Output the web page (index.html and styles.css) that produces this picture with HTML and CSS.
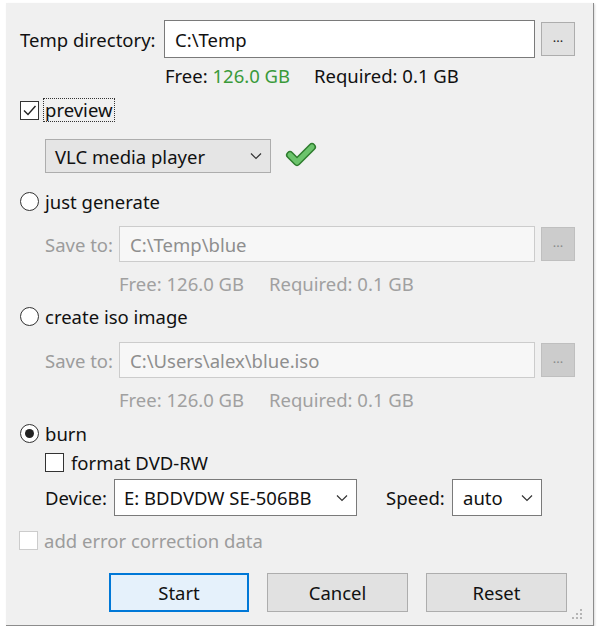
FILE: index.html
```html
<!DOCTYPE html>
<html>
<head>
<meta charset="utf-8">
<link rel="stylesheet" href="styles.css">
</head>
<body>
<div class="window">
  <div class="row row-temp">
    <span class="lbl lbl-temp">Temp directory:</span>
    <div class="input input-temp">C:\Temp</div>
    <div class="dots-btn">...</div>
  </div>
  <div class="row info info-1">
    <span class="free">Free: <span class="green">126.0 GB</span></span>
    <span>Required: 0.1 GB</span>
  </div>
  <div class="row row-preview">
    <span class="box checked"><svg width="17" height="17" viewBox="0 0 17 17"><path d="M3 8.5 L7 12.5 L14.5 4" fill="none" stroke="#222" stroke-width="1.4"/></svg></span>
    <span class="focus">preview</span>
  </div>
  <div class="row row-combo">
    <div class="combo combo-vlc"><span>VLC media player</span><svg class="chev" width="12" height="8" viewBox="0 0 12 8"><path d="M1 1.5 L6 6.5 L11 1.5" fill="none" stroke="#333" stroke-width="1.2"/></svg></div>
    <svg class="okicon" width="32" height="26" viewBox="0 0 32 26"><path d="M5 13 L12 20 L27 5" fill="none" stroke="#2f7d2f" stroke-width="8" stroke-linecap="round" stroke-linejoin="round"/><path d="M5 13 L12 20 L27 5" fill="none" stroke="#6cc46c" stroke-width="5" stroke-linecap="round" stroke-linejoin="round"/></svg>
  </div>
  <div class="row row-radio r1">
    <span class="radio"></span><span class="rlabel">just generate</span>
  </div>
  <div class="row row-save s1">
    <span class="lbl dis lbl-save">Save to:</span>
    <div class="input input-dis">C:\Temp\blue</div>
    <div class="dots-btn dots-dis">...</div>
  </div>
  <div class="row info info-dis">
    <span class="free-dis">Free: 126.0 GB</span>
    <span>Required: 0.1 GB</span>
  </div>
  <div class="row row-radio r2">
    <span class="radio"></span><span class="rlabel">create iso image</span>
  </div>
  <div class="row row-save s2">
    <span class="lbl dis lbl-save">Save to:</span>
    <div class="input input-dis">C:\Users\alex\blue.iso</div>
    <div class="dots-btn dots-dis">...</div>
  </div>
  <div class="row info info-dis">
    <span class="free-dis">Free: 126.0 GB</span>
    <span>Required: 0.1 GB</span>
  </div>
  <div class="row row-radio r3">
    <span class="radio on"></span><span class="rlabel">burn</span>
  </div>
  <div class="row row-format">
    <span class="box"></span><span class="rlabel">format DVD-RW</span>
  </div>
  <div class="row row-device">
    <span class="lbl lbl-dev">Device:</span>
    <div class="combo combo-white combo-dev"><span>E: BDDVDW SE-506BB</span><svg class="chev" width="12" height="8" viewBox="0 0 12 8"><path d="M1 1.5 L6 6.5 L11 1.5" fill="none" stroke="#333" stroke-width="1.2"/></svg></div>
    <span class="lbl lbl-speed">Speed:</span>
    <div class="combo combo-white combo-speed"><span>auto</span><svg class="chev" width="12" height="8" viewBox="0 0 12 8"><path d="M1 1.5 L6 6.5 L11 1.5" fill="none" stroke="#333" stroke-width="1.2"/></svg></div>
  </div>
  <div class="row row-error">
    <span class="box box-dis"></span><span class="rlabel dis">add error correction data</span>
  </div>
  <div class="row row-buttons">
    <div class="btn btn-focus">Start</div>
    <div class="btn">Cancel</div>
    <div class="btn">Reset</div>
  </div>
  <div class="grip">
    <svg width="12" height="12" viewBox="0 0 12 12" fill="#b5b5b5"><rect x="9" y="1" width="2" height="2"/><rect x="5" y="5" width="2" height="2"/><rect x="9" y="5" width="2" height="2"/><rect x="1" y="9" width="2" height="2"/><rect x="5" y="9" width="2" height="2"/><rect x="9" y="9" width="2" height="2"/></svg>
  </div>
</div>
</body>
</html>
```

FILE: styles.css
```css
html, body {
  margin: 0;
  padding: 0;
  background: #ffffff;
}
body {
  padding: 3px 0 0 6px;
  font-family: "Noto Sans", "Open Sans", sans-serif;
  font-size: 18.5px;
  color: #111;
}
.window {
  position: relative;
  box-sizing: border-box;
  width: 588px;
  height: 623px;
  background: #f0f0f0;
  border-right: 1px solid #8c8c8c;
  border-bottom: 1px solid #8c8c8c;
  box-shadow: 1px 1px 2px rgba(0,0,0,0.15);
  padding: 17px 0 0 14px;
  display: flex;
  flex-direction: column;
}
.row {
  display: flex;
  align-items: center;
  flex: none;
  white-space: nowrap;
}
.lbl { white-space: nowrap; }
.dis { color: #9c9c9c; }
.green { color: #3a9a3a; }

.row-temp { height: 38px; }
.lbl-temp { width: 144px; }
.input {
  box-sizing: border-box;
  height: 38px;
  border: 1px solid #7a7a7a;
  background: #fff;
  padding-left: 10px;
  display: flex;
  align-items: center;
}
.input-temp { width: 371px; }
.dots-btn {
  box-sizing: border-box;
  width: 34px;
  height: 34px;
  margin-left: 6px;
  background: #e1e1e1;
  border: 1px solid #adadad;
  display: flex;
  align-items: center;
  justify-content: center;
  font-size: 13px;
  padding-bottom: 4px;
  color: #222;
}
.dots-dis {
  background: #cccccc;
  border-color: #bfbfbf;
  color: #8a8a8a;
}
.info { height: 34px; padding-left: 145px; }
.free { width: 149px; }
.info-dis { height: 42px; padding-left: 99px; color: #a0a0a0; }
.free-dis { width: 150px; }

.row-preview { height: 36px; }
.box {
  box-sizing: border-box;
  width: 19px;
  height: 19px;
  border: 1px solid #333;
  background: #fff;
  display: inline-flex;
  align-items: center;
  justify-content: center;
  flex: none;
}
.box-dis { border-color: #cccccc; margin-left: -1px; }
.focus {
  margin-left: 4px;
  padding: 0 1px;
  border: 1px dotted #333;
  line-height: 22px;
}

.row-combo { height: 34px; margin-top: 11px; padding-left: 25px; }
.combo {
  box-sizing: border-box;
  height: 34px;
  background: #e5e5e5;
  border: 1px solid #adadad;
  display: flex;
  align-items: center;
  justify-content: space-between;
  padding: 0 8px 0 9px;
}
.combo-vlc { width: 226px; }
.okicon { margin-left: 14px; margin-top: -2px; }

.row-radio { height: 24px; }
.r1 { height: 38px; margin-top: 9px; }
.r3 { height: 26px; }
.radio {
  box-sizing: border-box;
  width: 19px;
  height: 19px;
  border: 1px solid #333;
  border-radius: 50%;
  background: #fff;
  flex: none;
  display: inline-flex;
  align-items: center;
  justify-content: center;
}
.radio.on::after {
  content: "";
  width: 9px;
  height: 9px;
  border-radius: 50%;
  background: #222;
}
.rlabel { margin-left: 6px; }

.row-save { height: 36px; padding-left: 25px; }
.s1 { margin-top: 6px; }
.s2 { margin-top: 14px; }
.lbl-save { width: 74px; }
.input-dis {
  width: 416px;
  height: 36px;
  border-color: #cccccc;
  background: #f7f7f7;
  color: #8e8e8e;
}

.row-format { height: 33px; padding-left: 25px; }
.row-format .rlabel { margin-left: 7px; }

.row-device { height: 37px; padding-left: 25px; }
.lbl-dev { width: 69px; }
.combo-white {
  height: 37px;
  background: #fff;
  border-color: #7a7a7a;
}
.combo-dev { width: 243px; }
.lbl-speed { margin-left: 29px; width: 66px; }
.combo-speed { width: 90px; padding-left: 10px; }

.row-error { height: 48px; }

.row-buttons { height: 39px; margin-top: 9px; padding-left: 89px; gap: 18px; }
.btn {
  box-sizing: border-box;
  width: 141px;
  height: 39px;
  background: #e1e1e1;
  border: 1px solid #adadad;
  display: flex;
  align-items: center;
  justify-content: center;
}
.btn-focus {
  width: 140px;
  border: 2px solid #0078d7;
  background: #e5f1fb;
}
.grip {
  position: absolute;
  right: 10px;
  bottom: 5px;
  line-height: 0;
}
```
